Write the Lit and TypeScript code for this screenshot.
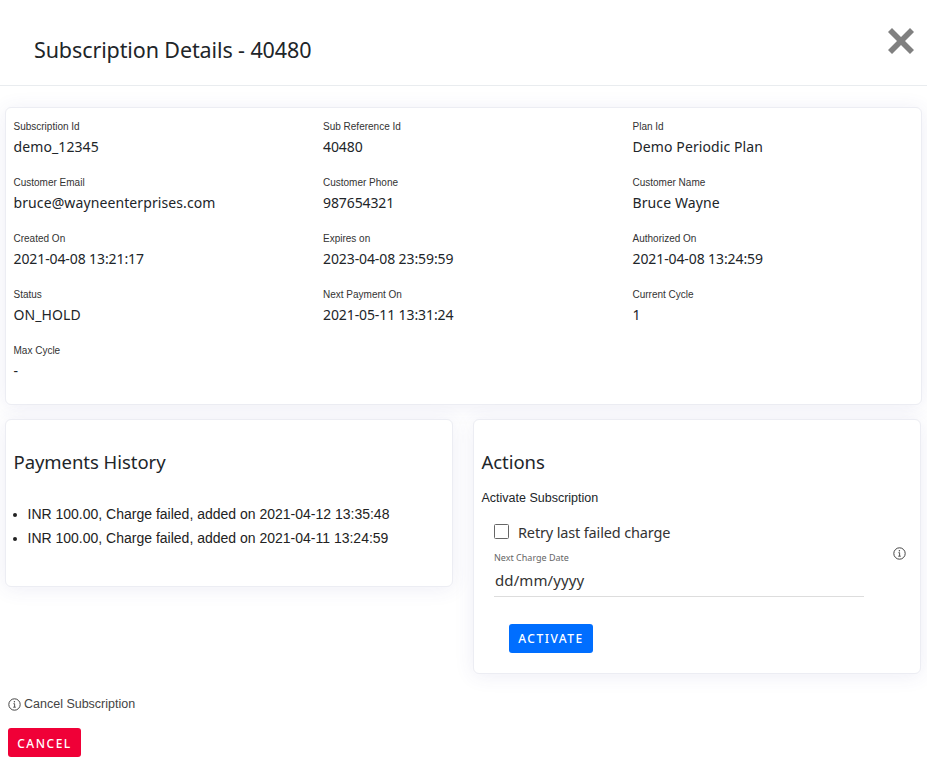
import { LitElement, html, css, svg } from 'lit';
import { customElement } from 'lit/decorators.js';
import { classMap } from 'lit/directives/class-map.js';

const details = [
  ['Subscription Id', 'demo_12345'],
  ['Sub Reference Id', '40480'],
  ['Plan Id', 'Demo Periodic Plan'],
  ['Customer Email', 'bruce@wayneenterprises.com'],
  ['Customer Phone', '987654321'],
  ['Customer Name', 'Bruce Wayne'],
  ['Created On', '2021-04-08 13:21:17'],
  ['Expires on', '2023-04-08 23:59:59'],
  ['Authorized On', '2021-04-08 13:24:59'],
  ['Status', 'ON_HOLD'],
  ['Next Payment On', '2021-05-11 13:31:24'],
  ['Current Cycle', '1'],
  ['Max Cycle', '-'],
];

const payments = [
  'INR 100.00, Charge failed, added on 2021-04-12 13:35:48',
  'INR 100.00, Charge failed, added on 2021-04-11 13:24:59',
];

// little circled "i" used next to the date field and the cancel label
const infoIcon = svg`<svg class="info" viewBox="0 0 13 13" width="13" height="13" fill="none" stroke="#444">
  <circle cx="6.5" cy="6.5" r="5.7" stroke-width="1"></circle>
  <path d="M5.4 5.7h1.2v3.4M5.2 9.2h2.6" stroke-width="0.9"></path>
  <circle cx="6.4" cy="3.8" r="0.7" fill="#444" stroke="none"></circle>
</svg>`;

@customElement('app-root')
export class AppRoot extends LitElement {
  static styles = css`
    :host {
      display: block;
      width: 927px;
      height: 782px;
      overflow: hidden;
      background: #fff;
      color: #212529;
      font-family: 'Noto Sans', sans-serif;
    }

    .header {
      height: 85px;
      border-bottom: 1px solid #e9ecef;
      display: flex;
      justify-content: space-between;
      align-items: flex-start;
      padding-left: 34px;
      padding-right: 12.5px;
    }

    .header h1 {
      margin: 35px 0 0;
      font-size: 21.5px;
      line-height: 30px;
      font-weight: 400;
      letter-spacing: -0.11px;
    }

    .close {
      margin-top: 26.5px;
    }

    .body {
      padding: 20.5px 4.5px 0;
    }

    .card {
      background: #fff;
      border: 1px solid #ecedf3;
      border-radius: 6px;
      box-shadow: 0 2px 20px rgba(70, 70, 160, 0.09);
      box-sizing: border-box;
    }

    .details {
      width: 917px;
      height: 298.5px;
      padding: 9px 0 0 8px;
      display: grid;
      grid-template-columns: 309.5px 309.5px 1fr;
      grid-auto-rows: 56px;
    }

    .label {
      font-family: 'Liberation Sans', sans-serif;
      font-size: 10px;
      line-height: 20px;
      color: #333;
      height: 20.5px;
    }

    .value {
      font-size: 14px;
      line-height: 20px;
      letter-spacing: 0.1px;
    }

    .value.num {
      letter-spacing: -0.1px;
    }

    .columns {
      display: flex;
      align-items: flex-start;
      gap: 19.5px;
      margin-top: 13.5px;
    }

    .history,
    .actions {
      width: 448.5px;
      padding: 0 8px;
    }

    .history {
      height: 168.5px;
    }

    .actions {
      height: 255.5px;
      position: relative;
    }

    h2 {
      margin: 28.5px 0 0;
      font-size: 18.5px;
      line-height: 28px;
      font-weight: 400;
      letter-spacing: -0.05px;
    }

    ul {
      margin: 25.5px 0 0;
      padding: 0 0 0 14px;
      font-family: 'Liberation Sans', sans-serif;
      font-size: 14px;
      line-height: 24px;
      color: #222;
    }

    .subhead {
      font-family: 'Liberation Sans', sans-serif;
      font-size: 12.5px;
      line-height: 20px;
      margin-top: 12px;
    }

    .form {
      margin: 11.5px 0 0 12.5px;
      width: 370px;
    }

    .retry {
      display: flex;
      align-items: center;
      gap: 9px;
      font-size: 14.5px;
      line-height: 24px;
      color: #333;
      letter-spacing: -0.15px;
    }

    .box {
      width: 13px;
      height: 13px;
      border: 1.5px solid #666;
      border-radius: 1.5px;
    }

    .field-label {
      font-size: 9px;
      line-height: 12px;
      color: #666;
      margin-top: 8.5px;
    }

    .date {
      font-size: 15px;
      line-height: 22px;
      letter-spacing: 0.1px;
      color: #333;
      padding: 5px 0 5px 1px;
      border-bottom: 1px solid #ddd;
    }

    .info-side {
      position: absolute;
      right: 14.5px;
      top: 127.5px;
      height: 13px;
    }

    .info {
      display: block;
    }

    button {
      display: block;
      border: 0;
      border-radius: 3px;
      color: #fff;
      font-family: 'Noto Sans', sans-serif;
      font-size: 12px;
      font-weight: 500;
      height: 29px;
      padding: 0;
      letter-spacing: 1.5px;
      text-transform: uppercase;
    }

    .activate {
      background: #006eff;
      width: 84px;
      margin: 27px 0 0 27.5px;
    }

    .footer {
      padding-left: 8px;
      margin-top: 22px;
    }

    .cancel-label {
      display: flex;
      align-items: center;
      gap: 3px;
      font-family: 'Liberation Sans', sans-serif;
      font-size: 12.5px;
      line-height: 16px;
      color: #444;
    }

    .cancel {
      background: #f00037;
      width: 73px;
      margin-top: 16px;
      padding-top: 1px;
    }
  `;

  render() {
    return html`
      <div class="header">
        <h1>Subscription Details - 40480</h1>
        <svg class="close" viewBox="0 0 28 28" width="28" height="28">
          <path d="M1 5 5 1 14 10 23 1 27 5 18 14 27 23 23 27 14 18 5 27 1 23 10 14Z" fill="#808080"></path>
        </svg>
      </div>
      <div class="body">
        <div class="card details">
          ${details.map(
            ([label, value]) => html`
              <div>
                <div class="label">${label}</div>
                <div class=${classMap({ value: true, num: /^\d/.test(value) })}>${value}</div>
              </div>
            `
          )}
        </div>
        <div class="columns">
          <div class="card history">
            <h2>Payments History</h2>
            <ul>
              ${payments.map((p) => html`<li>${p}</li>`)}
            </ul>
          </div>
          <div class="card actions">
            <h2>Actions</h2>
            <div class="subhead">Activate Subscription</div>
            <div class="form">
              <div class="retry"><span class="box"></span>Retry last failed charge</div>
              <div class="field-label">Next Charge Date</div>
              <div class="date">dd/mm/yyyy</div>
            </div>
            <div class="info-side">${infoIcon}</div>
            <button class="activate">Activate</button>
          </div>
        </div>
      </div>
      <div class="footer">
        <div class="cancel-label">${infoIcon}Cancel Subscription</div>
        <button class="cancel">Cancel</button>
      </div>
    `;
  }
}
